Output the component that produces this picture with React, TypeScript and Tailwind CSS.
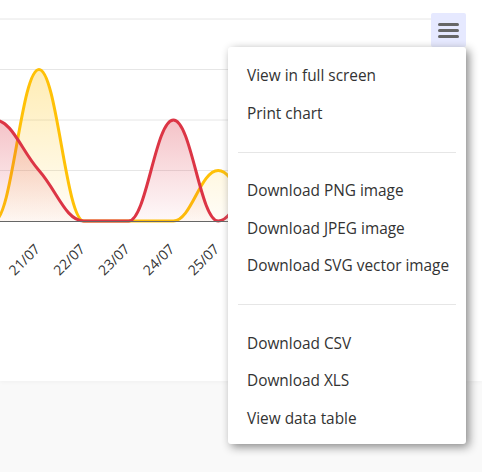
import React from "react";

type Pt = [number, number];

const FONT = { fontFamily: '"Open Sans", "Noto Sans", sans-serif' };

const DAYS = ["19/07", "20/07", "21/07", "22/07", "23/07", "24/07", "25/07", "26/07", "27/07", "28/07", "29/07", "30/07", "31/07"];
const YELLOW = [0, 0, 3, 0, 0, 0, 1, 0, 0, 1, 0, 0, 0];
const RED = [1, 2, 1, 0, 0, 2, 0, 1, 0, 0, 2, 0, 0];

const X0 = -50.6;
const STEP = 44.8;
const BASE = 221;
const UNIT = 50.5;
const GRID = [19, 69.5, 120, 170.5];
const PLOT_RIGHT = 458;

function toPoints(values: number[]): Pt[] {
  return values.map((v, i) => [X0 + STEP * i, BASE - UNIT * v]);
}

// same smoothing as a highcharts spline
function splinePath(pts: Pt[]) {
  const s = 1.5;
  const d = s + 1;
  const conts = pts.map(([x, y], i) => {
    if (i === 0 || i === pts.length - 1) return { l: [x, y], r: [x, y] };
    const [lx, ly] = pts[i - 1];
    const [nx, ny] = pts[i + 1];
    const lcx = (s * x + lx) / d;
    let lcy = (s * y + ly) / d;
    const rcx = (s * x + nx) / d;
    let rcy = (s * y + ny) / d;
    const corr = ((rcy - lcy) * (rcx - x)) / (rcx - lcx) + y - rcy;
    lcy += corr;
    rcy += corr;
    if (lcy > ly && lcy > y) {
      lcy = Math.max(ly, y);
      rcy = 2 * y - lcy;
    } else if (lcy < ly && lcy < y) {
      lcy = Math.min(ly, y);
      rcy = 2 * y - lcy;
    }
    if (rcy > ny && rcy > y) {
      rcy = Math.max(ny, y);
      lcy = 2 * y - rcy;
    } else if (rcy < ny && rcy < y) {
      rcy = Math.min(ny, y);
      lcy = 2 * y - rcy;
    }
    return { l: [lcx, lcy], r: [rcx, rcy] };
  });
  let path = `M ${pts[0][0]} ${pts[0][1]}`;
  for (let i = 1; i < pts.length; i++) {
    const a = conts[i - 1].r;
    const b = conts[i].l;
    path += ` C ${a[0]} ${a[1]} ${b[0]} ${b[1]} ${pts[i][0]} ${pts[i][1]}`;
  }
  return path;
}

function Series({ values, color, id }: { values: number[]; color: string; id: string }) {
  const pts = toPoints(values);
  const line = splinePath(pts);
  const last = pts[pts.length - 1];
  const area = `${line} L ${last[0]} ${BASE} L ${pts[0][0]} ${BASE} Z`;
  return (
    <g clipPath="url(#plot-clip)">
      <defs>
        <linearGradient id={id} x1="0" y1="0" x2="0" y2="1">
          <stop offset="0" stopColor={color} stopOpacity="0.3" />
          <stop offset="1" stopColor={color} stopOpacity="0.03" />
        </linearGradient>
      </defs>
      <path d={area} fill={`url(#${id})`} />
      <path d={line} fill="none" stroke={color} strokeWidth="3" strokeLinejoin="round" strokeLinecap="round" />
    </g>
  );
}

function Chart() {
  return (
    <svg width="482" height="381" className="block">
      <defs>
        <clipPath id="plot-clip">
          <rect x="0" y="0" width={PLOT_RIGHT} height={BASE + 3} />
        </clipPath>
      </defs>
      {GRID.map((y) => (
        <line key={y} x1="0" x2={PLOT_RIGHT} y1={y} y2={y} stroke="#e6e6e6" strokeWidth="1" />
      ))}
      <Series values={YELLOW} color="#ffc107" id="fill-yellow" />
      <Series values={RED} color="#dc3545" id="fill-red" />
      <line x1="0" x2={PLOT_RIGHT} y1={BASE + 0.5} y2={BASE + 0.5} stroke="#666666" strokeWidth="1" />
      {DAYS.map((day, i) => {
        const x = X0 + STEP * i + 2;
        if (x < 0 || x > 400) return null;
        return (
          <text
            key={day}
            x={x}
            y={250}
            fontSize="14"
            fill="#333333"
            textAnchor="end"
            transform={`rotate(-45 ${x} 250)`}
            style={FONT}
          >
            {day}
          </text>
        );
      })}
    </svg>
  );
}

const GROUPS = [
  ["View in full screen", "Print chart"],
  ["Download PNG image", "Download JPEG image", "Download SVG vector image"],
  ["Download CSV", "Download XLS", "View data table"],
];

function ExportMenu() {
  return (
    <div
      className="absolute left-[228px] top-[47px] w-[238px] rounded-[3px] bg-white pb-[7px] pt-[10px] shadow-[3px_3px_10px_#888]"
      style={FONT}
    >
      {GROUPS.map((group, gi) => (
        <div key={gi}>
          {gi > 0 && <div className="mx-[10px] my-[19.5px] h-px bg-[#e6e6e6]" />}
          {group.map((label) => (
            <div key={label} className="flex h-[37.5px] items-center pl-[19px] text-[15.4px] text-[#333]">
              {label}
            </div>
          ))}
        </div>
      ))}
    </div>
  );
}

export default function App() {
  return (
    <div className="relative h-[472px] w-[482px] overflow-hidden bg-[#f9f9f9]">
      <div className="relative h-[381px] bg-white shadow-[0_1px_4px_rgba(0,0,0,0.04)]">
        <Chart />
        <button
          type="button"
          aria-label="Chart menu"
          className="absolute left-[431px] top-[13px] flex h-[34px] w-[35px] flex-col items-center justify-center gap-[3px] rounded-[2px] bg-[#e6e9ff]"
        >
          <span className="h-[3px] w-[21px] rounded-full bg-[#666]" />
          <span className="h-[3px] w-[21px] rounded-full bg-[#666]" />
          <span className="h-[3px] w-[21px] rounded-full bg-[#666]" />
        </button>
      </div>
      <ExportMenu />
    </div>
  );
}
